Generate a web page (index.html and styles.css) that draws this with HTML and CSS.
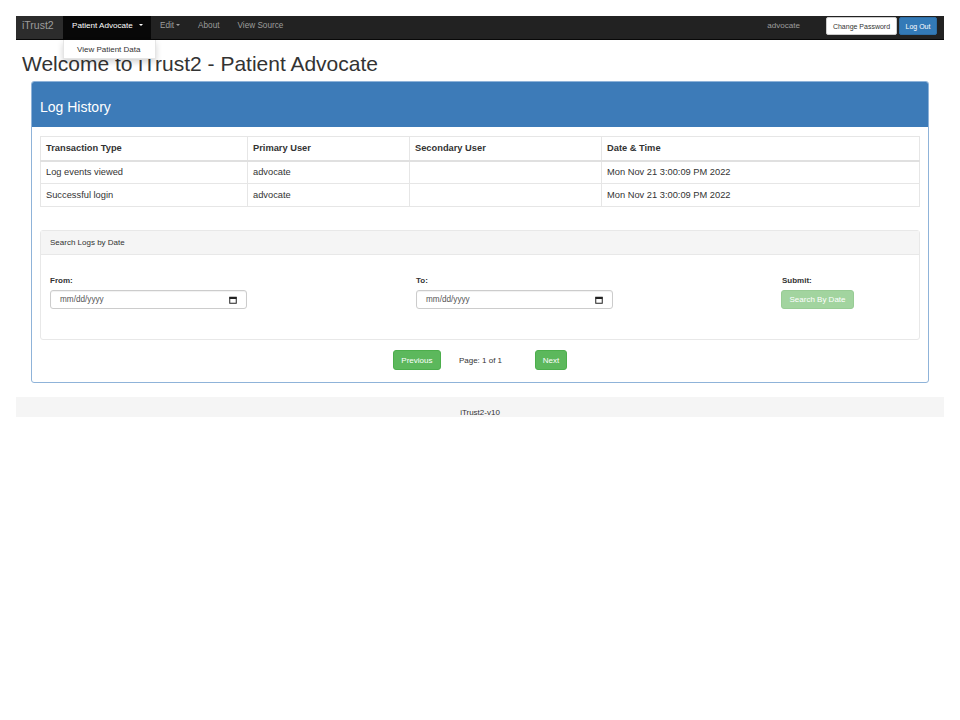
FILE: index.html
```html
<!DOCTYPE html>
<html>
<head>
<meta charset="utf-8">
<title>iTrust2</title>
<link rel="stylesheet" href="styles.css">
</head>
<body>
<div class="page">
  <nav class="navbar">
    <div class="nav-left">
      <span class="brand">iTrust2</span>
      <span class="nav-item active">Patient Advocate <span class="caret"></span>
        <div class="dropdown">View Patient Data</div>
      </span>
      <span class="nav-item">Edit<span class="caret"></span></span>
      <span class="nav-item">About</span>
      <span class="nav-item">View Source</span>
    </div>
    <div class="nav-right">
      <span class="user">advocate</span>
      <span class="btn-white">Change Password</span>
      <span class="btn-blue">Log Out</span>
    </div>
  </nav>

  <h1 class="title">Welcome to iTrust2 - Patient Advocate</h1>

  <div class="panel">
    <div class="panel-heading">Log History</div>
    <div class="panel-body">
      <table class="log-table">
        <thead>
          <tr><th class="c1">Transaction Type</th><th class="c2">Primary User</th><th class="c3">Secondary User</th><th>Date &amp; Time</th></tr>
        </thead>
        <tbody>
          <tr><td>Log events viewed</td><td>advocate</td><td></td><td>Mon Nov 21 3:00:09 PM 2022</td></tr>
          <tr><td>Successful login</td><td>advocate</td><td></td><td>Mon Nov 21 3:00:09 PM 2022</td></tr>
        </tbody>
      </table>

      <div class="search-panel">
        <div class="search-heading">Search Logs by Date</div>
        <div class="search-body">
          <div class="field">
            <label>From:</label>
            <div class="date-input"><span>mm/dd/yyyy</span>
              <svg width="8" height="8" viewBox="0 0 8 8"><rect x="0.75" y="1.25" width="6.5" height="6" fill="none" stroke="#222" stroke-width="1"/><rect x="0.5" y="1" width="7" height="2" fill="#222"/></svg>
            </div>
          </div>
          <div class="field">
            <label>To:</label>
            <div class="date-input"><span>mm/dd/yyyy</span>
              <svg width="8" height="8" viewBox="0 0 8 8"><rect x="0.75" y="1.25" width="6.5" height="6" fill="none" stroke="#222" stroke-width="1"/><rect x="0.5" y="1" width="7" height="2" fill="#222"/></svg>
            </div>
          </div>
          <div class="field">
            <label>Submit:</label>
            <span class="btn-search">Search By Date</span>
          </div>
        </div>
      </div>

      <div class="pager">
        <span class="btn-green prev">Previous</span>
        <span class="page-text">Page: 1 of 1</span>
        <span class="btn-green next">Next</span>
      </div>
    </div>
  </div>

  <footer class="footer">iTrust2-v10</footer>
</div>
</body>
</html>
```

FILE: styles.css
```css
* { box-sizing: border-box; }
html, body { margin: 0; padding: 0; background: #fff; }
body {
  font-family: "Liberation Sans", Arial, Helvetica, sans-serif;
  color: #333;
  font-size: 9.3px;
}
.page { padding: 16px 16px 0 16px; }

.navbar {
  height: 24px;
  background: #222;
  border-bottom: 1px solid #080808;
  display: flex;
  justify-content: space-between;
  align-items: stretch;
  position: relative;
}
.nav-left, .nav-right { display: flex; align-items: stretch; }
.brand {
  background: #2c2c2c;
  color: #9d9d9d;
  font-size: 10.5px;
  line-height: 12px;
  padding: 3px 9px 0 6px;
  width: 47px;
}
.nav-item {
  color: #9d9d9d;
  font-size: 8.2px;
  line-height: 9px;
  padding: 5px 9px 0 9px;
  position: relative;
  white-space: nowrap;
}
.nav-item.active {
  background: #080808;
  color: #fff;
  font-size: 8.1px;
  padding: 5px 8px 0 9px;
}
.caret {
  display: inline-block;
  width: 0; height: 0;
  border-top: 2.5px solid currentColor;
  border-left: 2.5px solid transparent;
  border-right: 2.5px solid transparent;
  margin-left: 2px;
  vertical-align: middle;
  position: relative;
  top: -1px;
}
.nav-item.active .caret { margin-left: 4px; }
.dropdown {
  position: absolute;
  top: 24px;
  left: 0;
  width: 93px;
  height: 19px;
  background: #fff;
  color: #333;
  font-size: 8px;
  line-height: 9px;
  padding: 5px 0 0 13px;
  box-shadow: 0 3px 6px rgba(0,0,0,0.18);
  border: 1px solid rgba(0,0,0,0.1);
  border-top: none;
  z-index: 10;
  white-space: nowrap;
}
.nav-right { align-items: flex-start; padding-top: 1px; padding-right: 7px; }
.user { color: #9d9d9d; font-size: 8.1px; margin-right: 26px; line-height: 18px; }
.btn-white {
  background: #fff;
  color: #333;
  font-size: 7px;
  border: 1px solid #ccc;
  border-radius: 2px;
  height: 18px;
  width: 71px;
  display: flex; align-items: center; justify-content: center;
  margin-right: 2px;
}
.btn-blue {
  background: #337ab7;
  color: #fff;
  font-size: 7px;
  border: 1px solid #2e6da4;
  border-radius: 2px;
  height: 18px;
  width: 38px;
  display: flex; align-items: center; justify-content: center;
}

.title {
  font-size: 21px;
  font-weight: normal;
  line-height: 23px;
  margin: 12px 0 6px 6px;
  color: #333;
}

.panel {
  margin: 0 15px;
  border: 1px solid #8fb3d9;
  border-radius: 3px;
}
.panel-heading {
  background: #3d7bb8;
  color: #fff;
  font-size: 14px;
  height: 45px;
  padding: 4px 0 0 8px;
  display: flex; align-items: center;
  border-radius: 2px 2px 0 0;
}
.panel-body { padding: 9px 8px 12px 8px; }

.log-table {
  width: 100%;
  border-collapse: collapse;
  border: 1px solid #e6e6e6;
}
.log-table th, .log-table td {
  text-align: left;
  padding: 0 5px;
  border: 1px solid #e6e6e6;
  height: 23px;
  font-size: 9.3px;
  color: #333;
}
.log-table th { font-weight: bold; height: 24px; border-bottom: 2px solid #e0e0e0; }
.log-table .c1 { width: 207px; }
.log-table .c2 { width: 162px; }
.log-table .c3 { width: 192px; }

.search-panel {
  margin-top: 23px;
  border: 1px solid #e8e8e8;
  border-radius: 3px;
}
.search-heading {
  background: #f5f5f5;
  border-bottom: 1px solid #e8e8e8;
  height: 24px;
  font-size: 8px;
  padding: 0 9px;
  display: flex; align-items: center;
  color: #333;
}
.search-body {
  display: grid;
  grid-template-columns: 366px 366px 1fr;
  padding: 21px 9px 30px 9px;
}
.field label {
  display: block;
  font-weight: bold;
  font-size: 8px;
  margin-bottom: 5px;
  color: #333;
}
.date-input {
  width: 197px;
  height: 19px;
  border: 1px solid #ccc;
  border-radius: 3px;
  display: flex; align-items: center; justify-content: space-between;
  padding: 0 9px 0 9px;
  font-size: 8.2px;
  color: #555;
  box-shadow: inset 0 1px 1px rgba(0,0,0,0.06);
}
.btn-search {
  display: inline-flex; align-items: center; justify-content: center;
  width: 73px;
  height: 19px;
  margin-left: -1px;
  background: #a2d49f;
  border: 1px solid #98cc95;
  border-radius: 3px;
  color: #fff;
  font-size: 8px;
}

.pager {
  display: flex;
  justify-content: center;
  align-items: center;
  margin-top: 10px;
}
.btn-green {
  display: inline-flex; align-items: center; justify-content: center;
  height: 20px;
  background: #5cb85c;
  border: 1px solid #4cae4c;
  border-radius: 3px;
  color: #fff;
  font-size: 8px;
}
.btn-green.prev { width: 48px; }
.btn-green.next { width: 32px; }
.page-text { font-size: 8px; margin: 0 33px 0 18px; color: #333; }

.footer {
  margin-top: 14px;
  background: #f5f5f5;
  height: 20px;
  text-align: center;
  font-size: 8px;
  padding-top: 12px;
  line-height: 8px;
  color: #333;
}
```
